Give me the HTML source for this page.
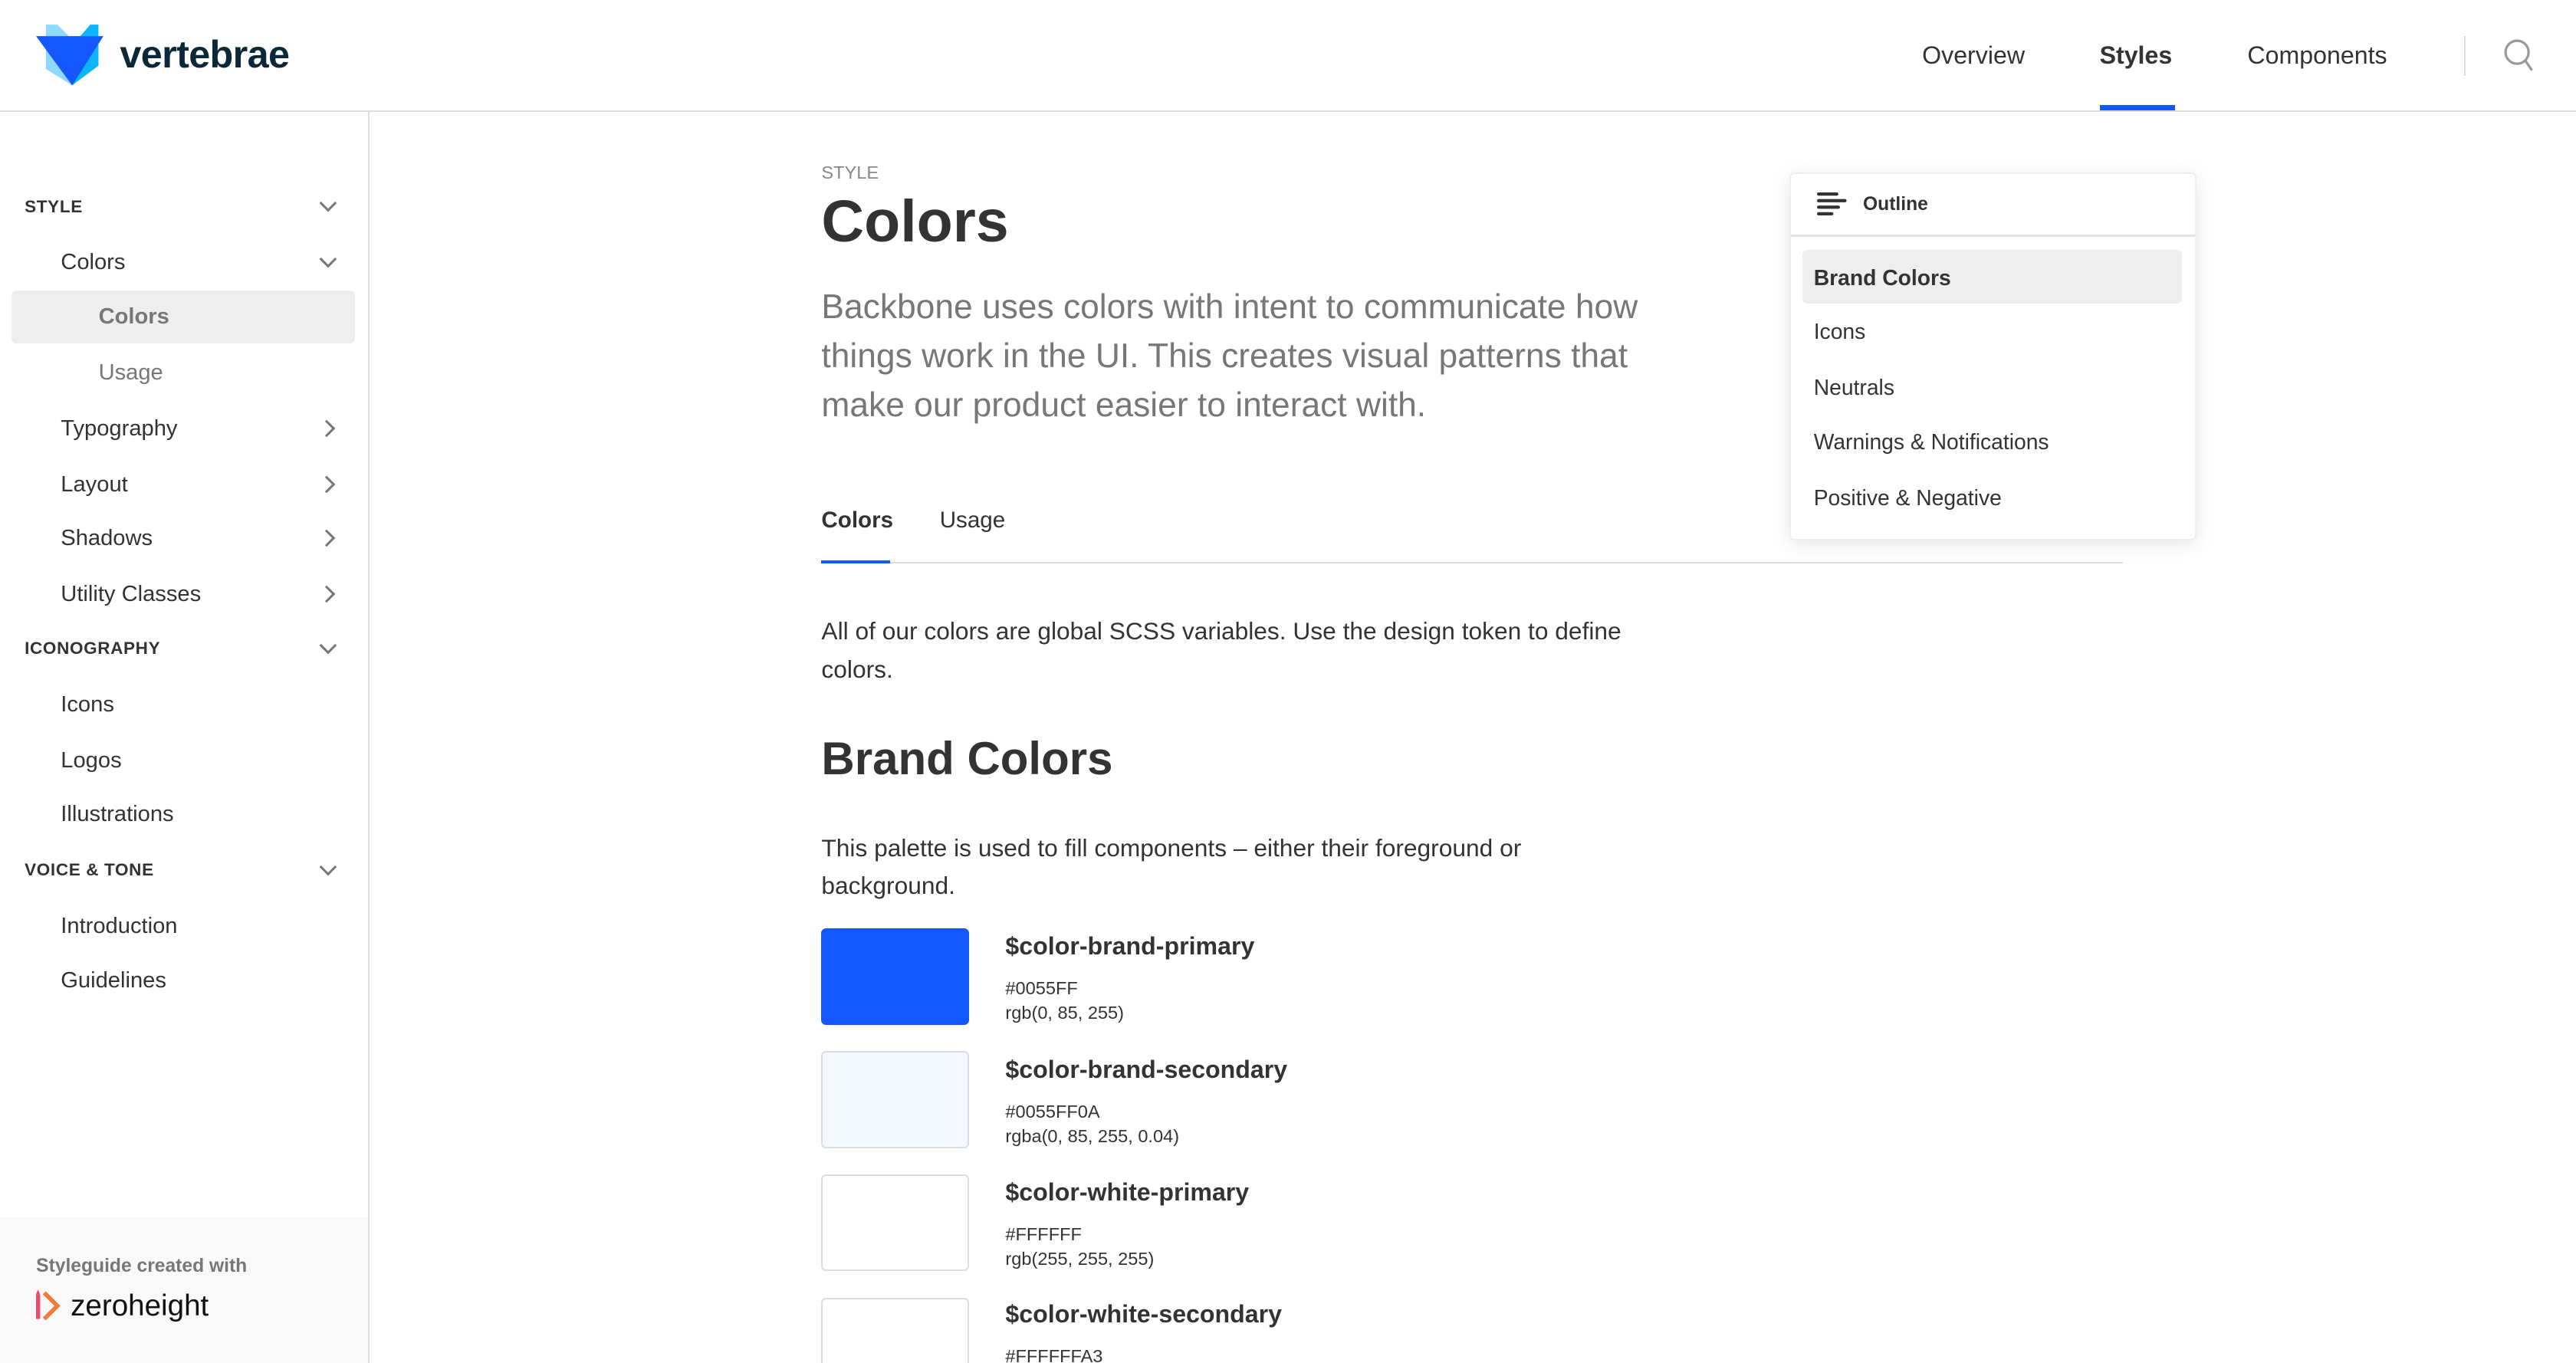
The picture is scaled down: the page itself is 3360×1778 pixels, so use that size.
<!DOCTYPE html>
<html><head><meta charset="utf-8"><style>
html,body{margin:0;padding:0;background:#fff;overflow:hidden;width:3360px;height:1778px}
#w{zoom:2.142857;position:relative;width:1568px;height:830px;font-family:"Liberation Sans",sans-serif;color:#333}
.t{position:absolute;white-space:nowrap;line-height:20px}
.b{font-weight:bold}
.chev{position:absolute;left:196px;width:6px;height:6px;border-right:1.8px solid #777;border-bottom:1.8px solid #777}
.dn{transform:rotate(45deg)}
.rt{transform:rotate(-45deg)}
.sw{position:absolute;left:500px;width:88px;height:57px;border:1px solid #ddd;border-radius:3px}
.s{font-size:13.6px}
</style></head><body><div id="w">
<div style="position:absolute;left:0;top:0;width:1568px;height:67px;border-bottom:1px solid #ddd"></div>
<svg style="position:absolute;left:22px;top:14px" width="42" height="40" viewBox="0 0 42 40">
<polygon points="6,1 13,1 20,8 6,8" fill="#8fd9ff"/>
<polygon points="6,8 6,28 22,38" fill="#8fd9ff"/>
<polygon points="33,1 38,1 38,8 27,8" fill="#0bb6ff"/>
<polygon points="38,8 38,26 22,38" fill="#0bb6ff"/>
<polygon points="0,8 41,8 22,38" fill="#1457ff"/>
</svg>
<div class="t b" style="left:73px;top:19px;font-size:23.5px;line-height:28px;color:#0a2838;letter-spacing:-0.3px">vertebrae</div>
<div class="t" style="left:1170px;top:24px;font-size:15px">Overview</div>
<div class="t b" style="left:1278px;top:24px;font-size:15px">Styles</div>
<div style="position:absolute;left:1278px;top:64px;width:46px;height:3px;background:#1457ff"></div>
<div class="t" style="left:1368px;top:24px;font-size:15px">Components</div>
<div style="position:absolute;left:1500px;top:22px;width:1px;height:24px;background:#ddd"></div>
<svg style="position:absolute;left:1524px;top:24px" width="22" height="22" viewBox="0 0 22 22"><circle cx="8" cy="8" r="7" fill="none" stroke="#999" stroke-width="1.5"/><line x1="13" y1="13" x2="17" y2="19" stroke="#999" stroke-width="1.5"/></svg>
<div style="position:absolute;left:224px;top:68px;width:1px;height:762px;background:#ddd"></div>
<div style="position:absolute;left:7px;top:177px;width:209px;height:32px;background:#eee;border-radius:3px"></div>
<div class="t b" style="left:15px;top:116px;font-size:10.5px;letter-spacing:.3px">STYLE</div><div class="chev dn" style="top:120px"></div>
<div class="t s" style="left:37px;top:150px">Colors</div><div class="chev dn" style="top:154px"></div>
<div class="t b s" style="left:60px;top:183px;color:#777">Colors</div>
<div class="t s" style="left:60px;top:217px;color:#777">Usage</div>
<div class="t s" style="left:37px;top:251px">Typography</div><div class="chev rt" style="top:257px;left:195px"></div>
<div class="t s" style="left:37px;top:285px">Layout</div><div class="chev rt" style="top:291px;left:195px"></div>
<div class="t s" style="left:37px;top:318px">Shadows</div><div class="chev rt" style="top:324px;left:195px"></div>
<div class="t s" style="left:37px;top:352px">Utility Classes</div><div class="chev rt" style="top:358px;left:195px"></div>
<div class="t b" style="left:15px;top:385px;font-size:10.5px;letter-spacing:.3px">ICONOGRAPHY</div><div class="chev dn" style="top:389px"></div>
<div class="t s" style="left:37px;top:419px">Icons</div>
<div class="t s" style="left:37px;top:453px">Logos</div>
<div class="t s" style="left:37px;top:486px">Illustrations</div>
<div class="t b" style="left:15px;top:520px;font-size:10.5px;letter-spacing:.3px">VOICE &amp; TONE</div><div class="chev dn" style="top:524px"></div>
<div class="t s" style="left:37px;top:554px">Introduction</div>
<div class="t s" style="left:37px;top:587px">Guidelines</div>
<div style="position:absolute;left:0;top:741px;width:224px;height:89px;background:#f9f9f9"></div>
<div class="t b" style="left:22px;top:761px;font-size:11.5px;color:#777">Styleguide created with</div>
<svg style="position:absolute;left:22px;top:785px" width="16" height="20" viewBox="0 0 16 20"><rect x="0" y="3" width="2.5" height="15" fill="#ee4a6a"/><polygon points="0,3 1.2,0 2.5,3" fill="#ee4a6a"/><polyline points="5,2 13,10 5,18" fill="none" stroke="#f27a3a" stroke-width="2.6"/></svg>
<div class="t" style="left:43px;top:784px;font-size:18px;line-height:22px;color:#111;font-weight:300">zeroheight</div>
<div class="t" style="left:500px;top:95px;font-size:11px;color:#888">STYLE</div>
<div class="t b" style="left:500px;top:114px;font-size:36px;line-height:42px;color:#333">Colors</div>
<div style="position:absolute;left:500px;top:172px;width:540px;font-size:20.7px;line-height:30px;color:#777">Backbone uses colors with intent to communicate how things work in the UI. This creates visual patterns that make our product easier to interact with.</div>
<div class="t b" style="left:500px;top:307px;font-size:13.8px">Colors</div>
<div class="t" style="left:572px;top:307px;font-size:13.8px">Usage</div>
<div style="position:absolute;left:500px;top:342px;width:792px;height:1px;background:#ddd"></div>
<div style="position:absolute;left:500px;top:341px;width:42px;height:2px;background:#1457ff"></div>
<div style="position:absolute;left:500px;top:373px;width:520px;font-size:14.8px;line-height:23px">All of our colors are global SCSS variables. Use the design token to define colors.</div>
<div class="t b" style="left:500px;top:445px;font-size:28px;line-height:34px">Brand Colors</div>
<div style="position:absolute;left:500px;top:505px;width:460px;font-size:14.8px;line-height:23px">This palette is used to fill components – either their foreground or background.</div>
<div class="sw" style="top:565px;background:#1457ff;border-color:#1457ff"></div>
<div class="sw" style="top:640px;background:#f4f8ff"></div>
<div class="sw" style="top:715px;background:#fff"></div>
<div class="sw" style="top:790px;background:#fff;height:60px"></div>
<div class="t b" style="left:612px;top:566px;font-size:15px">$color-brand-primary</div>
<div class="t" style="left:612px;top:594px;font-size:11px;line-height:15px">#0055FF<br>rgb(0, 85, 255)</div>
<div class="t b" style="left:612px;top:641px;font-size:15px">$color-brand-secondary</div>
<div class="t" style="left:612px;top:669px;font-size:11px;line-height:15px">#0055FF0A<br>rgba(0, 85, 255, 0.04)</div>
<div class="t b" style="left:612px;top:716px;font-size:15px">$color-white-primary</div>
<div class="t" style="left:612px;top:744px;font-size:11px;line-height:15px">#FFFFFF<br>rgb(255, 255, 255)</div>
<div class="t b" style="left:612px;top:790px;font-size:15px">$color-white-secondary</div>
<div class="t" style="left:612px;top:818px;font-size:11px;line-height:15px">#FFFFFFA3</div>
<div style="position:absolute;left:1089px;top:105px;width:246px;height:222px;border:1px solid #eee;border-radius:3px;box-shadow:0 2px 12px rgba(0,0,0,.1);background:#fff"></div>
<svg style="position:absolute;left:1106px;top:117px" width="18" height="14" viewBox="0 0 18 14"><g stroke="#333" stroke-width="2" stroke-linecap="round"><line x1="1" y1="1" x2="12" y2="1"/><line x1="1" y1="5" x2="17" y2="5"/><line x1="1" y1="9" x2="13" y2="9"/><line x1="1" y1="13" x2="9" y2="13"/></g></svg>
<div class="t b" style="left:1134px;top:115px;font-size:11.5px">Outline</div>
<div style="position:absolute;left:1090px;top:143px;width:246px;height:1px;background:#e2e2e2"></div>
<div style="position:absolute;left:1097px;top:152px;width:231px;height:33px;background:#eee;border-radius:3px"></div>
<div class="t b" style="left:1104px;top:159px;font-size:13.2px">Brand Colors</div>
<div class="t" style="left:1104px;top:192px;font-size:13.2px">Icons</div>
<div class="t" style="left:1104px;top:226px;font-size:13.2px">Neutrals</div>
<div class="t" style="left:1104px;top:259px;font-size:13.2px">Warnings &amp; Notifications</div>
<div class="t" style="left:1104px;top:293px;font-size:13.2px">Positive &amp; Negative</div>
</div></body></html>
